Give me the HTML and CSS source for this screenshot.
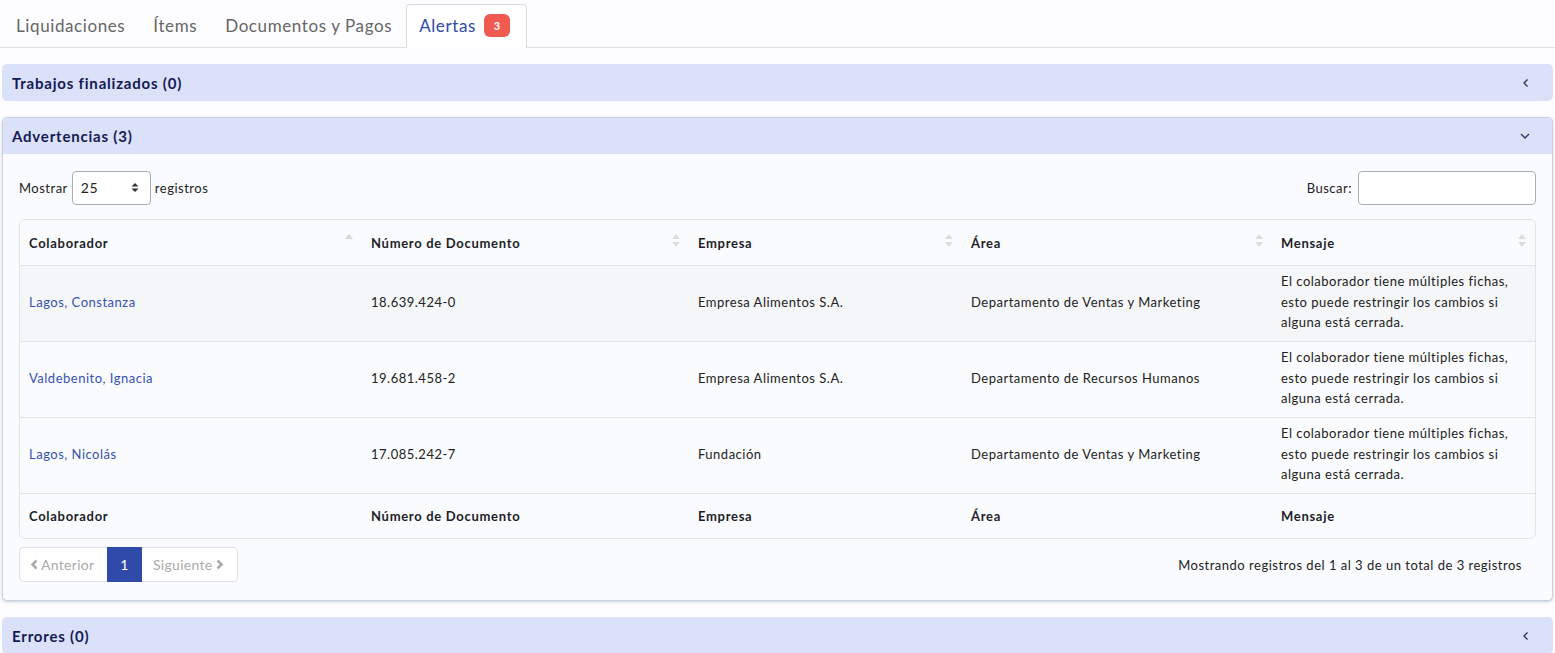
FILE: index.html
```html
<!DOCTYPE html>
<html lang="es">
<head>
<meta charset="utf-8">
<title>Alertas</title>
<link rel="stylesheet" href="styles.css">
</head>
<body>
<ul class="tabs">
  <li class="tab">Liquidaciones</li>
  <li class="tab">Ítems</li>
  <li class="tab">Documentos y Pagos</li>
  <li class="tab active">Alertas <span class="badge">3</span></li>
</ul>

<div class="card collapsed">
  <div class="card-header"><span>Trabajos finalizados (0)</span>
    <svg class="chev" width="10" height="10" viewBox="0 0 10 10"><path d="M6.5 1.5 L3 5 L6.5 8.5" fill="none" stroke="#2a2f5a" stroke-width="1.3"/></svg>
  </div>
</div>

<div class="card open">
  <div class="card-header"><span>Advertencias (3)</span>
    <svg class="chev" width="12" height="10" viewBox="0 0 12 10"><path d="M2 3 L6 7 L10 3" fill="none" stroke="#2a2f5a" stroke-width="1.3"/></svg>
  </div>
  <div class="card-body">
    <div class="controls">
      <label class="length">Mostrar
        <span class="select">25
          <svg width="8" height="11" viewBox="0 0 8 11"><path d="M0.5 4.5 L4 1 L7.5 4.5 Z M0.5 6.5 L4 10 L7.5 6.5 Z" fill="#333"/></svg>
        </span>
        registros</label>
      <label class="search">Buscar: <span class="input"></span></label>
    </div>
    <div class="table-wrap">
      <table>
        <colgroup>
          <col class="c1"><col class="c2"><col class="c3"><col class="c4"><col class="c5">
        </colgroup>
        <thead>
          <tr>
            <th>Colaborador<span class="sort asc"></span></th>
            <th>Número de Documento<span class="sort"></span></th>
            <th>Empresa<span class="sort"></span></th>
            <th>Área<span class="sort"></span></th>
            <th>Mensaje<span class="sort"></span></th>
          </tr>
        </thead>
        <tbody>
          <tr class="odd">
            <td><a>Lagos, Constanza</a></td>
            <td>18.639.424-0</td>
            <td>Empresa Alimentos S.A.</td>
            <td>Departamento de Ventas y Marketing</td>
            <td>El colaborador tiene múltiples fichas, esto puede restringir los cambios si alguna está cerrada.</td>
          </tr>
          <tr>
            <td><a>Valdebenito, Ignacia</a></td>
            <td>19.681.458-2</td>
            <td>Empresa Alimentos S.A.</td>
            <td>Departamento de Recursos Humanos</td>
            <td>El colaborador tiene múltiples fichas, esto puede restringir los cambios si alguna está cerrada.</td>
          </tr>
          <tr>
            <td><a>Lagos, Nicolás</a></td>
            <td>17.085.242-7</td>
            <td>Fundación</td>
            <td>Departamento de Ventas y Marketing</td>
            <td>El colaborador tiene múltiples fichas, esto puede restringir los cambios si alguna está cerrada.</td>
          </tr>
        </tbody>
        <tfoot>
          <tr>
            <th>Colaborador</th>
            <th>Número de Documento</th>
            <th>Empresa</th>
            <th>Área</th>
            <th>Mensaje</th>
          </tr>
        </tfoot>
      </table>
    </div>
    <div class="bottom">
      <div class="pager">
        <span class="pg disabled prev"><svg width="9" height="11" viewBox="0 0 9 11"><path d="M6.5 1.5 L2.5 5.5 L6.5 9.5" fill="none" stroke="#ababab" stroke-width="2.6"/></svg>Anterior</span>
        <span class="pg current">1</span>
        <span class="pg disabled next">Siguiente<svg width="9" height="11" viewBox="0 0 9 11"><path d="M2.5 1.5 L6.5 5.5 L2.5 9.5" fill="none" stroke="#ababab" stroke-width="2.6"/></svg></span>
      </div>
      <div class="info">Mostrando registros del 1 al 3 de un total de 3 registros</div>
    </div>
  </div>
</div>

<div class="card collapsed">
  <div class="card-header"><span>Errores (0)</span>
    <svg class="chev" width="10" height="10" viewBox="0 0 10 10"><path d="M6.5 1.5 L3 5 L6.5 8.5" fill="none" stroke="#2a2f5a" stroke-width="1.3"/></svg>
  </div>
</div>
</body>
</html>
```

FILE: styles.css
```css
* { box-sizing: border-box; }
html, body { margin: 0; padding: 0; }
body {
  font-family: Lato, "Noto Sans", sans-serif;
  background: #fdfdff;
  color: #222;
  font-size: 13px;
  letter-spacing: 0.5px;
  overflow: hidden;
  height: 653px;
}
.tabs {
  list-style: none;
  margin: 0;
  padding: 4px 0 0 2px;
  display: flex;
  border-bottom: 1px solid #dee2e6;
}
.tab {
  font-size: 17px;
  letter-spacing: 0.6px;
  color: #666;
  padding: 0 13px 2px;
  height: 43px;
  display: flex;
  align-items: center;
  border: 1px solid transparent;
  border-bottom: none;
  margin-bottom: -1px;
}
.tab.active {
  color: #2f4aa8;
  background: #fff;
  border-color: #d9dce3;
  border-radius: 4px 4px 0 0;
  height: 44px;
  padding: 0 16px 2px 12px;
}
.badge {
  background: #f15a50;
  color: #fff;
  font-size: 11px;
  letter-spacing: 0;
  font-weight: 700;
  border-radius: 6px;
  width: 26px;
  height: 23px;
  display: inline-flex;
  align-items: center;
  justify-content: center;
  margin-left: 8px;
}
.card {
  margin: 16px 2px 0 2px;
  border-radius: 5px;
}
.card-header {
  height: 37px;
  background: #dae1f8;
  color: #151a55;
  font-weight: 700;
  font-size: 15px;
  letter-spacing: 0.8px;
  padding: 0 10px;
  display: flex;
  align-items: center;
  justify-content: space-between;
  border-radius: 5px;
}
.chev { margin-right: 12px; }
.card.open {
  border: 1px solid #cdd2e0;
  box-shadow: 0 1px 3px rgba(60,70,110,0.25);
  background: #fafbfe;
}
.card.open .card-header {
  border-radius: 5px 5px 0 0;
  height: 36px;
  padding-left: 9px;
}
.card.open .chev { margin-right: 11px; }
.card-body {
  padding: 17px 16px 18px 16px;
}
.controls {
  display: flex;
  justify-content: space-between;
  align-items: center;
  height: 33px;
}
.controls label { display: flex; align-items: center; gap: 4px; }
.select {
  width: 79px;
  height: 34px;
  border: 1px solid #a9adb6;
  border-radius: 4px;
  background: #fff;
  display: inline-flex;
  align-items: center;
  justify-content: space-between;
  padding: 0 11px 0 8px;
  font-size: 14px;
  color: #222;
}
.input {
  display: inline-block;
  width: 178px;
  height: 34px;
  border: 1px solid #a9adb6;
  border-radius: 4px;
  background: #fff;
  margin-left: 2px;
}
.table-wrap {
  margin-top: 15px;
  border: 1px solid #e2e4e8;
  border-radius: 6px;
  overflow: hidden;
  background: #fafbfd;
}
table {
  width: 100%;
  border-collapse: collapse;
  table-layout: fixed;
}
.c1 { width: 342px; }
.c2 { width: 327px; }
.c3 { width: 273px; }
.c4 { width: 310px; }
.c5 { width: auto; }
th {
  text-align: left;
  font-weight: 700;
  letter-spacing: 0.7px;
  color: #1e1e2a;
  height: 45px;
  padding: 1px 9px 0;
  position: relative;
}
thead th { border-bottom: 1px solid #e2e4e8; }
td {
  height: 76px;
  padding: 0 9px 2px;
  line-height: 20.5px;
  border-bottom: 1px solid #e2e4e8;
  color: #222;
}
tr.odd td { background: #f5f6f8; }
td a { color: #3652b0; }
td:last-child { padding-right: 20px; }
.sort {
  position: absolute;
  right: 9px;
  top: 13px;
  width: 8px;
  height: 16px;
}
.sort::before, .sort::after {
  content: "";
  position: absolute;
  left: 0;
  width: 0; height: 0;
  border-left: 4px solid transparent;
  border-right: 4px solid transparent;
}
.sort::before { top: 1px; border-bottom: 5px solid #dcdde2; }
.sort::after { top: 9px; border-top: 5px solid #dcdde2; }
.sort.asc::after { display: none; }
.sort.asc::before { border-bottom-color: #d4d6dc; }
.bottom {
  margin-top: 8px;
  display: flex;
  justify-content: space-between;
  align-items: center;
}
.pager {
  display: flex;
  height: 35px;
  border: 1px solid #dfe1e6;
  border-radius: 4px;
  background: #fff;
}
.pg {
  display: flex;
  align-items: center;
  gap: 2px;
  color: #aaa;
  font-size: 14px;
  letter-spacing: 0.3px;
}
.pg svg { flex-shrink: 0; }
.pg.prev { padding: 0 0 0 10px; width: 87px; }
.pg.next { padding: 0 0 0 11px; width: 95px; }
.pg.current {
  background: #2f4aa8;
  color: #fff;
  width: 35px;
  justify-content: center;
  padding: 0;
  margin: -1px 0;
}
.info { margin-right: 14px; font-size: 13px; color: #222; }
```
